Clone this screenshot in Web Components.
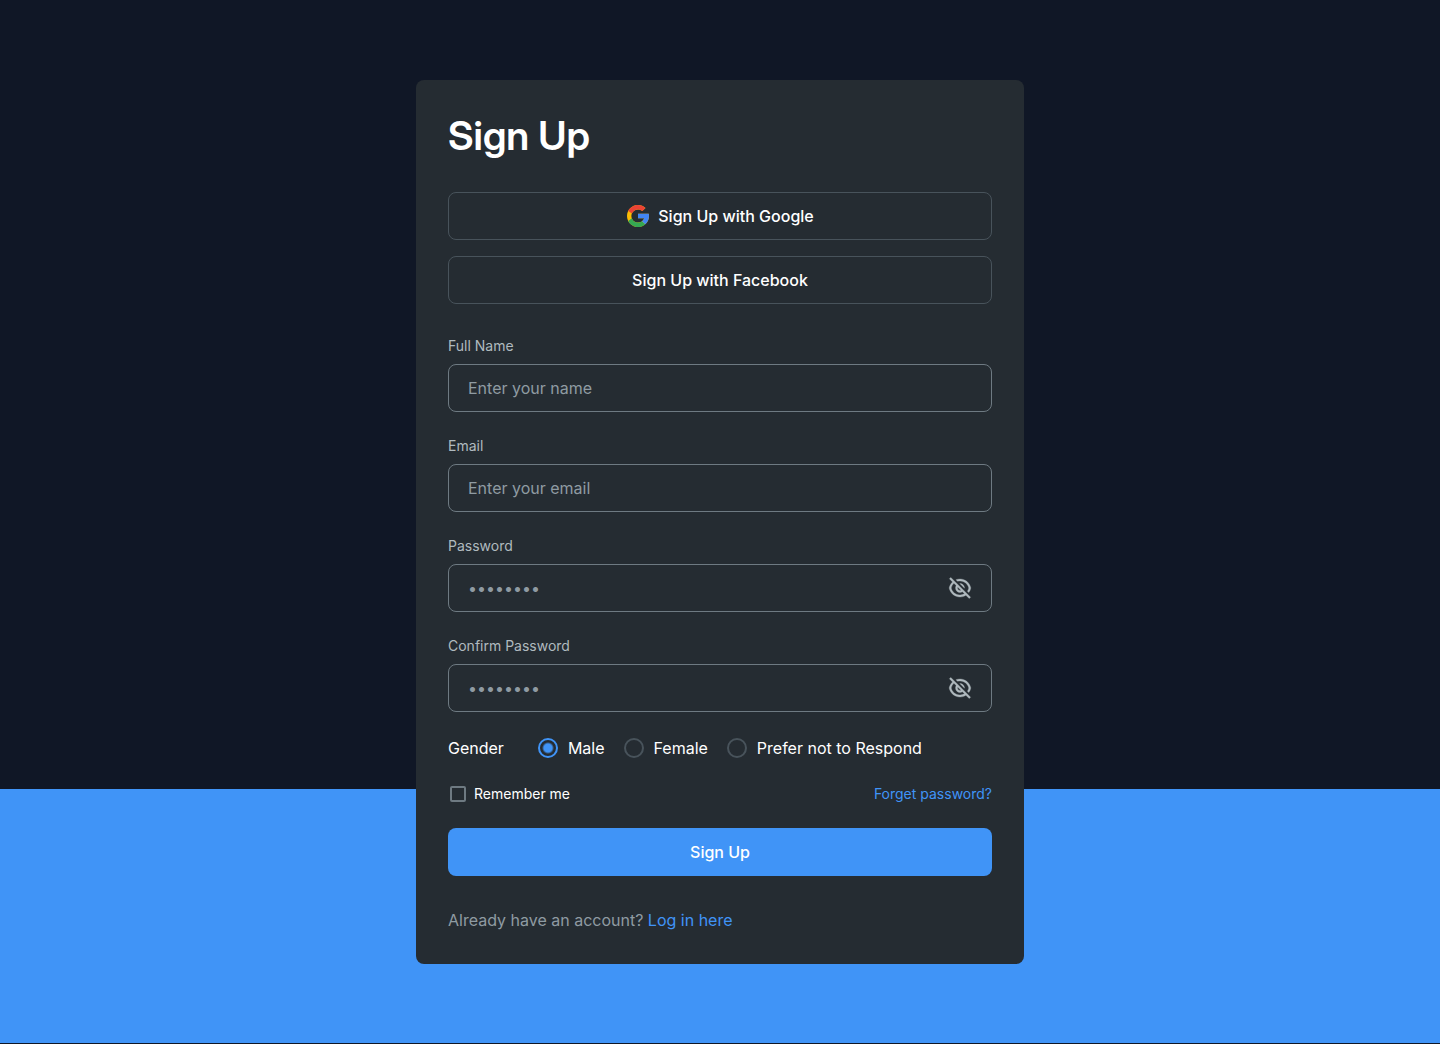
<!DOCTYPE html>
<html lang="en">
<head>
<meta charset="utf-8">
<meta name="viewport" content="width=device-width, initial-scale=1">
<title>Sign Up</title>
<style>
  :root {
    --page: #101726;
    --card: #252c32;
    --blue: #4094f7;
    --line: #48535b;
    --field-line: #6e7a82;
    --muted: #8f9ba2;
    --label: #b0babf;
    --white: #ffffff;
  }
  body {
    margin: 0;
    background: var(--page);
    color: var(--white);
    font: 400 16px/24px Inter, sans-serif;
  }
</style>
</head>
<body>
<signup-page>
  <signup-card heading="Sign Up">
    <social-button label="Sign Up with Google">
      <svg slot="icon" width="24" height="24" viewBox="0 0 48 48" aria-hidden="true">
        <g transform="translate(-2.4 -2.4) scale(1.1)">
          <path fill="#FBBC05" d="M43.611 20.083H42V20H24v8h11.303c-1.649 4.657-6.08 8-11.303 8-6.627 0-12-5.373-12-12s5.373-12 12-12c3.059 0 5.842 1.154 7.961 3.039l5.657-5.657C34.046 6.053 29.268 4 24 4 12.955 4 4 12.955 4 24s8.955 20 20 20 20-8.955 20-20c0-1.341-.138-2.65-.389-3.917z"/>
          <path fill="#EA4335" d="M6.306 14.691l6.571 4.819C14.655 15.108 18.961 12 24 12c3.059 0 5.842 1.154 7.961 3.039l5.657-5.657C34.046 6.053 29.268 4 24 4 16.318 4 9.656 8.337 6.306 14.691z"/>
          <path fill="#34A853" d="M24 44c5.166 0 9.86-1.977 13.409-5.192l-6.19-5.238C29.211 35.091 26.715 36 24 36c-5.202 0-9.619-3.317-11.283-7.946l-6.522 5.025C9.505 39.556 16.227 44 24 44z"/>
          <path fill="#4285F4" d="M43.611 20.083H42V20H24v8h11.303c-.792 2.237-2.231 4.166-4.087 5.571l.003-.002 6.19 5.238C36.971 39.205 44 34 44 24c0-1.341-.138-2.65-.389-3.917z"/>
        </g>
      </svg>
    </social-button>
    <social-button label="Sign Up with Facebook"></social-button>
    <text-field slot="form" label="Full Name" type="text" hint="Enter your name"></text-field>
    <text-field slot="form" label="Email" type="email" hint="Enter your email"></text-field>
    <text-field slot="form" label="Password" type="password" hint="••••••••"></text-field>
    <text-field slot="form" label="Confirm Password" type="password" hint="••••••••"></text-field>
    <gender-picker slot="form"></gender-picker>
    <remember-row slot="form"></remember-row>
    <submit-button slot="form">Sign Up</submit-button>
    <login-prompt slot="footer"></login-prompt>
  </signup-card>
</signup-page>

<script>
  const define = (name, render, after) =>
    customElements.define(name, class extends HTMLElement {
      connectedCallback() {
        if (this.shadowRoot) return;
        const template = document.createElement('template');
        template.innerHTML = '<style>*{box-sizing:border-box}</style>' + render(this);
        this.attachShadow({ mode: 'open' }).append(template.content.cloneNode(true));
        if (after) after(this.shadowRoot);
      }
    });

  define('signup-page', () => `
    <style>
      :host {
        display: flex;
        justify-content: center;
        align-items: center;
        box-sizing: border-box;
        min-height: 100vh;
        padding: 80px 16px;
        background: linear-gradient(var(--blue), var(--blue)) 0 calc(100% - 1px) / 100% 254px no-repeat var(--page);
      }
      main { width: 100%; max-width: 608px; }
    </style>
    <main><slot></slot></main>`);

  define('signup-card', el => `
    <style>
      :host {
        display: flex;
        flex-direction: column;
        gap: 32px;
        box-sizing: border-box;
        padding: 32px;
        border-radius: 8px;
        background: var(--card);
      }
      h1 {
        margin: 0;
        font: 600 40px/48px "Inter Display", Inter, sans-serif;
        font-variation-settings: "opsz" 32;
      }
      .social { display: flex; flex-direction: column; gap: 16px; }
      form { display: flex; flex-direction: column; gap: 24px; margin: 0; }
    </style>
    <h1>${el.getAttribute('heading')}</h1>
    <div class="social"><slot></slot></div>
    <form><slot name="form"></slot></form>
    <slot name="footer"></slot>`);

  define('social-button', el => `
    <style>
      :host { display: block; }
      button {
        display: flex;
        align-items: center;
        justify-content: center;
        gap: 8px;
        width: 100%;
        height: 48px;
        padding: 0 16px;
        border: 1px solid var(--line);
        border-radius: 8px;
        background: transparent;
        color: var(--white);
        font: inherit;
        font-weight: 500;
        cursor: pointer;
      }
    </style>
    <button type="button"><slot name="icon"></slot><span>${el.getAttribute('label')}</span></button>`);

  const eyeOff = `<svg width="24" height="24" viewBox="0 0 24 24" fill="currentColor" stroke="currentColor" stroke-width=".3" aria-hidden="true"><path d="M17.8827 19.2968C16.1814 20.3755 14.1638 21.0002 12.0003 21.0002C6.60812 21.0002 2.12215 17.1204 1.18164 12.0002C1.61832 9.62282 2.81932 7.5129 4.52047 5.93457L1.39366 2.80777L2.80788 1.39355L22.6069 21.1925L21.1927 22.6068L17.8827 19.2968ZM5.9356 7.3497C4.60673 8.56015 3.6378 10.1672 3.22278 12.0002C4.14022 16.0521 7.7646 19.0002 12.0003 19.0002C13.5997 19.0002 15.112 18.5798 16.4243 17.8384L14.396 15.8101C13.7023 16.2472 12.8808 16.5002 12.0003 16.5002C9.51498 16.5002 7.50026 14.4854 7.50026 12.0002C7.50026 11.1196 7.75317 10.2981 8.19031 9.60442L5.9356 7.3497ZM12.9139 14.328L9.67246 11.0866C9.5613 11.3696 9.50026 11.6777 9.50026 12.0002C9.50026 13.3809 10.6196 14.5002 12.0003 14.5002C12.3227 14.5002 12.6309 14.4391 12.9139 14.328ZM20.8068 16.5925L19.376 15.1617C20.0319 14.2268 20.5154 13.1586 20.7777 12.0002C19.8603 7.94818 16.2359 5.00016 12.0003 5.00016C11.1544 5.00016 10.3329 5.11773 9.55249 5.33818L7.97446 3.76015C9.22127 3.26959 10.5793 3.00016 12.0003 3.00016C17.3924 3.00016 21.8784 6.87992 22.8189 12.0002C22.5067 13.6998 21.8038 15.2628 20.8068 16.5925ZM11.7229 7.50857C11.8146 7.50299 11.9071 7.50016 12.0003 7.50016C14.4855 7.50016 16.5003 9.51488 16.5003 12.0002C16.5003 12.0933 16.4974 12.1858 16.4919 12.2775L11.7229 7.50857Z"/></svg>`;

  define('text-field', el => `
    <style>
      :host { display: flex; flex-direction: column; gap: 8px; }
      label { color: var(--label); font-size: 14px; line-height: 20px; }
      .box {
        display: flex;
        align-items: center;
        gap: 8px;
        height: 48px;
        padding: 0 19px;
        border: 1px solid var(--field-line);
        border-radius: 8px;
      }
      .box:focus-within { border-color: var(--blue); }
      input {
        flex: 1;
        min-width: 0;
        height: 24px;
        padding: 0;
        border: 0;
        outline: 0;
        background: transparent;
        color: var(--white);
        font: inherit;
      }
      input::placeholder { color: var(--muted); opacity: 1; }
      button {
        display: flex;
        padding: 0;
        border: 0;
        background: transparent;
        color: var(--label);
        cursor: pointer;
      }
    </style>
    <label for="field">${el.getAttribute('label')}</label>
    <div class="box">
      <input id="field" type="${el.getAttribute('type')}" placeholder="${el.getAttribute('hint')}">
      ${el.getAttribute('type') === 'password' ? `<button type="button" aria-label="Show password">${eyeOff}</button>` : ''}
    </div>`, root => {
      const toggle = root.querySelector('button');
      const input = root.querySelector('input');
      if (toggle) toggle.addEventListener('click', () => {
        input.type = input.type === 'password' ? 'text' : 'password';
      });
    });

  define('gender-picker', () => `
    <style>
      :host { display: block; }
      .row { display: flex; flex-wrap: wrap; gap: 32px; }
      .options { display: flex; flex-wrap: wrap; gap: 17px; }
      label { display: flex; align-items: center; gap: 8px; }
      input {
        appearance: none;
        width: 20px;
        height: 20px;
        margin: 2px;
        border: 2px solid var(--line);
        border-radius: 50%;
      }
      input:checked {
        border-color: var(--blue);
        background: radial-gradient(circle, var(--blue) 4px, transparent 6px);
      }
    </style>
    <div class="row" role="radiogroup" aria-labelledby="title">
      <span id="title">Gender</span>
      <div class="options">
        <label><input type="radio" name="gender" value="male" checked>Male</label>
        <label><input type="radio" name="gender" value="female">Female</label>
        <label><input type="radio" name="gender" value="none">Prefer not to Respond</label>
      </div>
    </div>`);

  define('remember-row', () => `
    <style>
      :host {
        display: flex;
        justify-content: space-between;
        gap: 16px;
        font-size: 14px;
        line-height: 20px;
      }
      label { display: flex; align-items: center; gap: 6px; }
      input {
        appearance: none;
        width: 16px;
        height: 16px;
        margin: 2px;
        border: 2px solid var(--field-line);
        border-radius: 2px;
      }
      input:checked { background: var(--blue); }
      a { color: var(--blue); text-decoration: none; }
    </style>
    <label><input type="checkbox">Remember me</label>
    <a href="#forgot">Forget password?</a>`);

  define('submit-button', () => `
    <style>
      :host { display: block; }
      button {
        display: block;
        width: 100%;
        height: 48px;
        border: 0;
        border-radius: 8px;
        background: var(--blue);
        color: var(--white);
        font: inherit;
        font-weight: 500;
        cursor: pointer;
      }
    </style>
    <button type="submit"><slot></slot></button>`);

  define('login-prompt', () => `
    <style>
      :host { display: block; }
      p { margin: 0; color: var(--muted); }
      a { color: var(--blue); text-decoration: none; }
    </style>
    <p>Already have an account? <a href="#login">Log in here</a></p>`);
</script>
</body>
</html>
